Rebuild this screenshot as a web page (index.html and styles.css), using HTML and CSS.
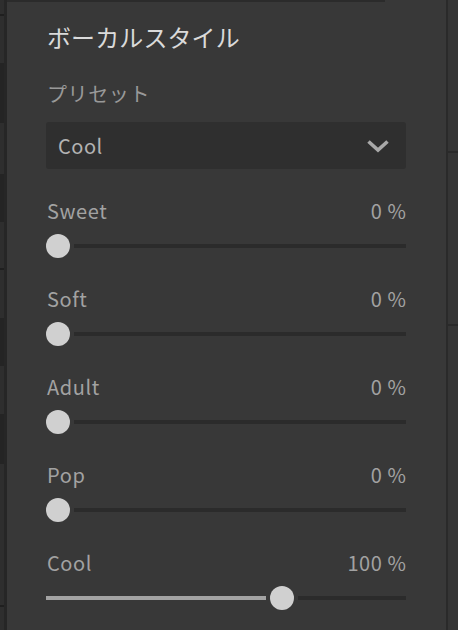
FILE: index.html
```html
<!DOCTYPE html>
<html lang="ja">
<head>
<meta charset="utf-8">
<link rel="stylesheet" href="styles.css">
</head>
<body>
<div class="app">
  <div class="left-strip">
    <div class="ls-cells">
      <div class="ls-line l1"></div>
      <div class="ls-dark d1"></div>
      <div class="ls-dark d2"></div>
      <div class="ls-line l2"></div>
      <div class="ls-dark d3"></div>
      <div class="ls-dark d4"></div>
      <div class="ls-line l3"></div>
    </div>
    <div class="ls-edge"></div>
  </div>

  <main class="panel">
    <div class="top-bar"></div>
    <h1 class="title">ボーカルスタイル</h1>
    <div class="section-label">プリセット</div>
    <div class="select">
      <span class="select-value">Cool</span>
      <svg class="chevron" width="24" height="14" viewBox="0 0 24 14">
        <polyline points="2.5,2.5 12,11 21.5,2.5" fill="none" stroke="#a9a9a9" stroke-width="3.6" stroke-linecap="butt" stroke-linejoin="miter"/>
      </svg>
    </div>

    <div class="field">
      <div class="field-head"><span>Sweet</span><span>0 %</span></div>
      <div class="slider"><div class="thumb"></div><div class="track"></div></div>
    </div>
    <div class="field">
      <div class="field-head"><span>Soft</span><span>0 %</span></div>
      <div class="slider"><div class="thumb"></div><div class="track"></div></div>
    </div>
    <div class="field">
      <div class="field-head"><span>Adult</span><span>0 %</span></div>
      <div class="slider"><div class="thumb"></div><div class="track"></div></div>
    </div>
    <div class="field">
      <div class="field-head"><span>Pop</span><span>0 %</span></div>
      <div class="slider"><div class="thumb"></div><div class="track"></div></div>
    </div>
    <div class="field">
      <div class="field-head"><span>Cool</span><span>100 %</span></div>
      <div class="slider"><div class="fill" style="width:220px"></div><div class="thumb"></div><div class="track"></div></div>
    </div>
  </main>

  <div class="right-strip">
    <div class="rs-cell c1"></div>
    <div class="rs-cell c2"></div>
    <div class="rs-cell c3"></div>
  </div>
</div>
</body>
</html>
```

FILE: styles.css
```css
* { box-sizing: border-box; }
html, body {
  margin: 0;
  padding: 0;
  background: #2d2d2d;
}
body {
  font-family: "Noto Sans CJK JP", "Noto Sans", sans-serif;
  font-weight: 400;
  width: 458px;
  height: 630px;
  overflow: hidden;
}
.app {
  display: flex;
  height: 630px;
}

/* left strip */
.left-strip {
  width: 7px;
  display: flex;
  flex: none;
}
.ls-cells {
  width: 4px;
  background: #2e2e2e;
  display: flex;
  flex-direction: column;
}
.ls-line { height: 2px; background: #1f1f1f; flex: none; }
.ls-dark { background: #242424; flex: none; }
.l1 { margin-top: 14px; }
.d1 { margin-top: 47px; height: 60px; }
.d2 { margin-top: 51px; height: 48px; }
.l2 { margin-top: 46px; }
.d3 { margin-top: 48px; height: 48px; }
.d4 { margin-top: 48px; height: 50px; }
.l3 { margin-top: 141px; }
.ls-edge {
  width: 3px;
  background: #262626;
}

/* main panel */
.panel {
  width: 439px;
  flex: none;
  background: #383838;
  padding: 0 40px 0 39px;
}
.top-bar {
  height: 2px;
  background: #2b2b2b;
  margin: 0 21px 0 -39px;
}
.title {
  margin: 19px 0 0 1px;
  font-size: 24px;
  line-height: 32px;
  font-weight: 400;
  color: #dadada;
  letter-spacing: 0.1px;
}
.section-label {
  margin: 27px 0 0 1px;
  font-size: 20px;
  line-height: 28px;
  color: #999999;
  letter-spacing: 0.6px;
}
.select {
  margin-top: 14px;
  height: 47px;
  background: #2f2f2f;
  border-radius: 3px;
  display: flex;
  align-items: center;
  justify-content: space-between;
  padding: 0 16px 0 12px;
}
.select-value {
  font-size: 20px;
  color: #b3b3b3;
  line-height: 28px;
  letter-spacing: 0.5px;
}
.chevron { display: block; }

/* fields */
.field {
  margin-top: 28px;
}
.field + .field { margin-top: 27px; }
.field-head {
  display: flex;
  justify-content: space-between;
  font-size: 20px;
  line-height: 28px;
  color: #a2a2a2;
  padding-left: 1px;
  letter-spacing: 0.6px;
}
.field-head span:last-child { margin-right: -0.6px; }
.slider {
  margin-top: 9px;
  height: 24px;
  display: flex;
  align-items: center;
}
.thumb {
  width: 24px;
  height: 24px;
  border-radius: 50%;
  background: #d0d0d0;
  flex: none;
}
.track {
  flex: 1;
  height: 4px;
  background: #2b2b2b;
  margin-left: 4px;
}
.fill {
  height: 4px;
  background: #a3a3a3;
  margin-right: 4px;
  flex: none;
}

/* right strip */
.right-strip {
  flex: 1;
  border-left: 2px solid #2a2a2a;
  background: #353535;
  display: flex;
  flex-direction: column;
}
.rs-cell { border-bottom: 2px solid #2a2a2a; }
.c1 { height: 153px; }
.c2 { height: 173px; }
.c3 { flex: 1; border-bottom: 0; }
```
